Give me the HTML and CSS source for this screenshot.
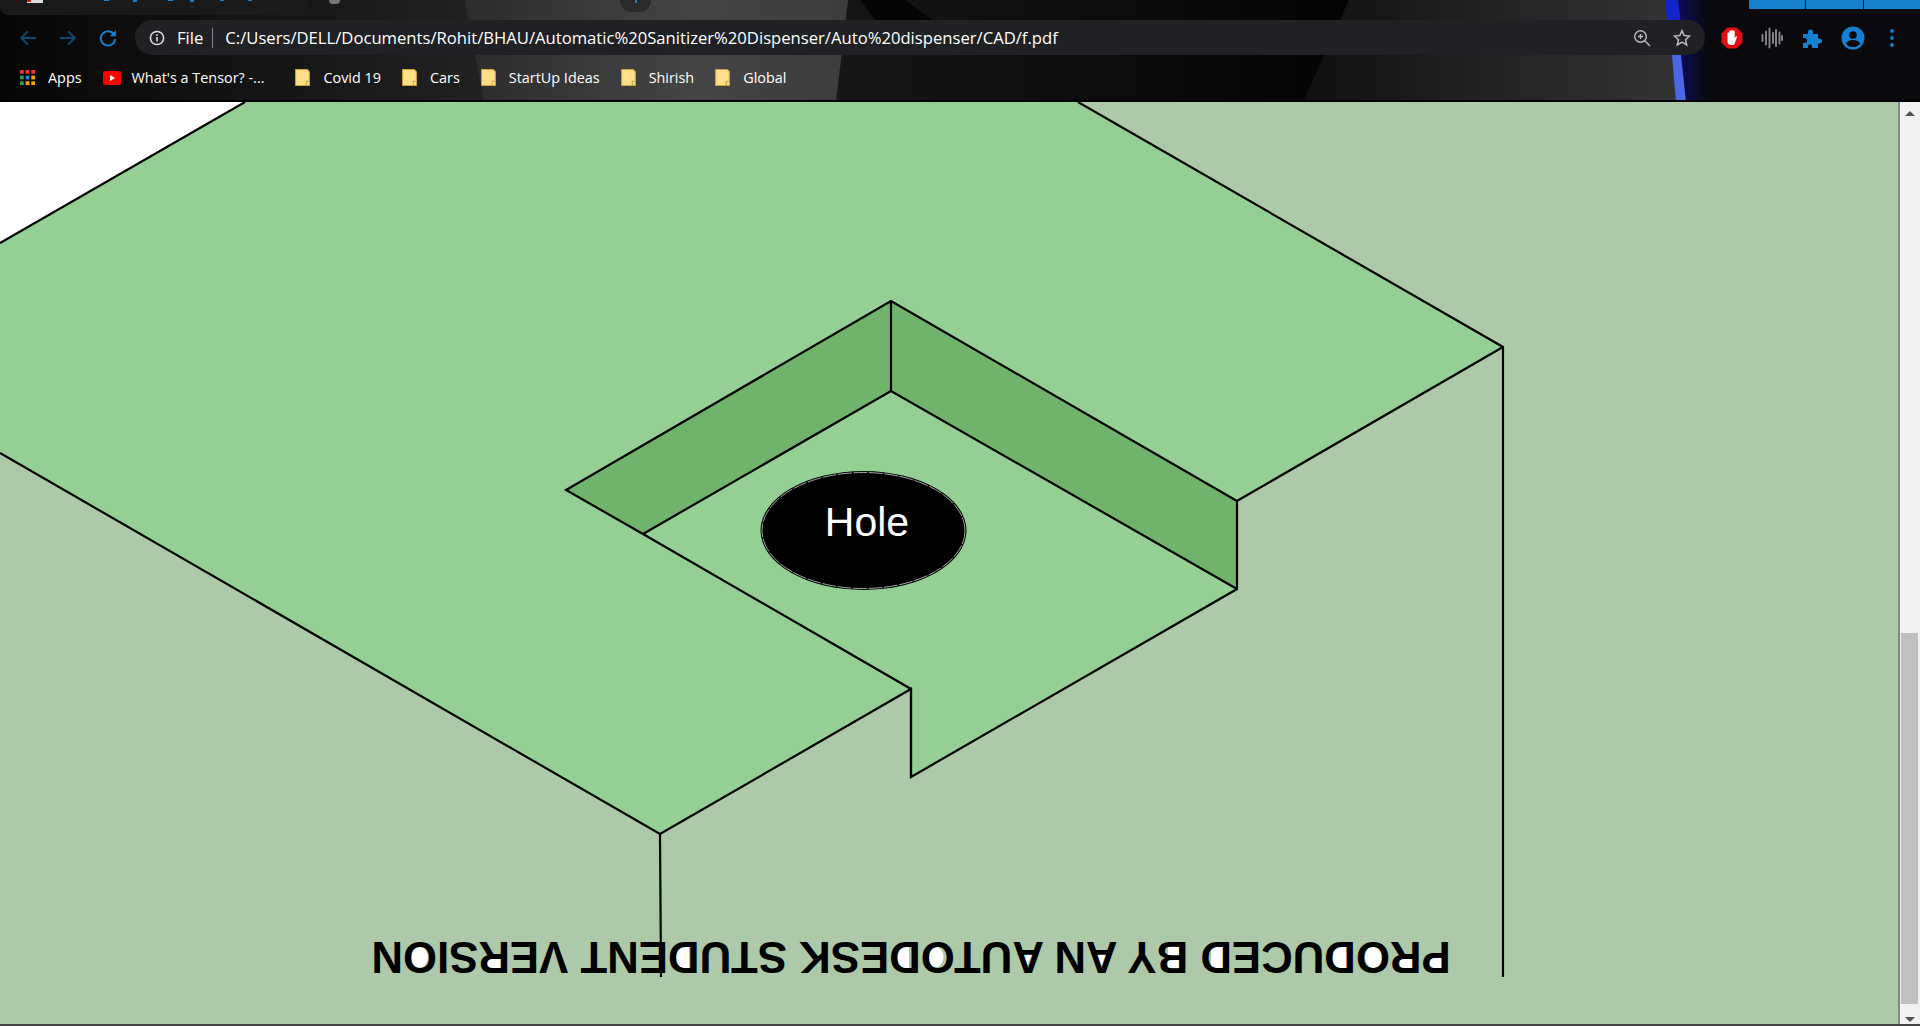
FILE: index.html
```html
<!DOCTYPE html>
<html lang="en">
<head>
    <meta charset="UTF-8">
    <meta name="viewport" content="width=device-width, initial-scale=1.0">
    <title>f.pdf</title>
    <link rel="stylesheet" href="styles.css">
</head>
<body>

    <header class="browser">
        <svg class="wallpaper" viewBox="0 0 1920 102" preserveAspectRatio="none">
            <defs>
                <linearGradient id="wp-left" x1="0" x2="1" y1="0" y2="0">
                    <stop offset="0" stop-color="#060607"/>
                    <stop offset="1" stop-color="#222"/>
                </linearGradient>
                <linearGradient id="wp-gray" x1="0" x2="1" y1="0" y2="0">
                    <stop offset="0" stop-color="#2c2c2c"/>
                    <stop offset="0.6" stop-color="#454545"/>
                    <stop offset="1" stop-color="#3c3c3c"/>
                </linearGradient>
                <linearGradient id="wp-mid" x1="0" x2="1" y1="0" y2="0">
                    <stop offset="0" stop-color="#161616"/>
                    <stop offset="1" stop-color="#030304"/>
                </linearGradient>
                <linearGradient id="wp-right" x1="0" x2="1" y1="0" y2="0">
                    <stop offset="0" stop-color="#101010"/>
                    <stop offset="1" stop-color="#343436"/>
                </linearGradient>
                <linearGradient id="wp-glow" x1="0" x2="1" y1="0" y2="0">
                    <stop offset="0" stop-color="#0a0a5c"/>
                    <stop offset="1" stop-color="#0a0a0e"/>
                </linearGradient>
            </defs>
            <rect width="1920" height="102" fill="#0a0a0e"/>
            <rect width="500" height="102" fill="url(#wp-left)"/>
            <polygon points="465,0 850,0 838,102 484,102" fill="url(#wp-gray)"/>
            <polygon points="848,0 1349,0 1303,102 836,102" fill="url(#wp-mid)"/>
            <polygon points="860,0 905,0 960,40 890,40" fill="#050505"/>
            <polygon points="1349,0 1668,0 1680,102 1303,102" fill="url(#wp-right)"/>
            <rect x="1678" width="30" height="102" fill="url(#wp-glow)"/>
            <polygon points="1665,0 1678,0 1683,40 1669,40" fill="#1224c8"/>
            <polygon points="1672,55 1681,55 1686,102 1676,102" fill="#4a68e6"/>
            <rect y="100" width="1920" height="2" fill="#000"/>
        </svg>

        <div class="tab-strip">
            <div class="tab-current">
                <svg class="tab-bits" viewBox="0 0 300 4">
                    <rect x="27" width="16" height="3" fill="#ddd"/>
                    <rect x="27" width="4" height="2" fill="#c22"/>
                    <rect x="104" width="5" height="1" fill="#1580d0"/>
                    <rect x="133" width="4" height="2" fill="#1580d0"/>
                    <rect x="168" width="5" height="1" fill="#1580d0"/>
                    <rect x="190" width="4" height="2" fill="#1580d0"/>
                    <rect x="220" width="4" height="1" fill="#1580d0"/>
                    <rect x="248" width="4" height="1" fill="#1580d0"/>
                </svg>
            </div>
            <div class="tab-dot"></div>
            <div class="tab-round"><span></span></div>
            <div class="win-controls">
                <span></span><span></span><span></span>
            </div>
        </div>

        <div class="toolbar">
            <div class="nav-btns">
                <svg class="nav-icon" viewBox="0 0 16 16"><path d="M15 8H2M8 2 2 8l6 6" fill="none" stroke="#0f4a75" stroke-width="1.6"/></svg>
                <svg class="nav-icon" viewBox="0 0 16 16"><path d="M1 8h13M8 2l6 6-6 6" fill="none" stroke="#0f4a75" stroke-width="1.6"/></svg>
                <svg class="nav-icon" viewBox="0 0 16 16"><path d="M13.6 5.200A6.400 6.400 0 1 0 14.400 9" fill="none" stroke="#1580d0" stroke-width="1.700"/><path d="M15 1v5.400H9.600z" fill="#1580d0"/></svg>
            </div>
            <div class="omnibox">
                <svg class="info-icon" viewBox="0 0 16 16"><circle cx="8" cy="8" r="6.600" fill="none" stroke="#ddd" stroke-width="1.500"/><path d="M7.200 7h1.600v4.600H7.200zM7.200 4.300h1.600v1.600H7.200z" fill="#ddd"/></svg>
                <span class="scheme">File</span>
                <span class="url">C:/Users/DELL/Documents/Rohit/BHAU/Automatic%20Sanitizer%20Dispenser/Auto%20dispenser/CAD/f.pdf</span>
                <svg class="omni-icon" viewBox="0 0 18 18"><circle cx="7.500" cy="7.500" r="5.800" fill="none" stroke="#bbb" stroke-width="1.400"/><path d="M11.800 11.800 17 17M5 7.500h5M7.500 5v5" fill="none" stroke="#bbb" stroke-width="1.400"/></svg>
                <svg class="omni-icon star" viewBox="0 0 18 18"><path d="M9 1.600l2.200 5 5.400.5-4.100 3.600 1.200 5.300L9 13.200 4.300 16l1.200-5.300L1.400 7.100l5.400-.5z" fill="none" stroke="#bbb" stroke-width="1.500"/></svg>
            </div>
            <div class="ext-btns">
                <svg class="ext-icon" viewBox="0 0 22 22"><polygon points="6.500,0.500 15.500,0.500 21.500,6.500 21.500,15.500 15.500,21.500 6.500,21.500 0.500,15.500 0.500,6.500" fill="#e01010"/><path d="M6.500 11V6.500a.9.900 0 0 1 1.800 0V4.500a.9.900 0 0 1 1.800 0V3.800a.9.900 0 0 1 1.800 0v.7a.9.900 0 0 1 1.800 0V11l1-1.500c.6-.8 1.700-.1 1.200.7L13.500 17c-.5.700-1 1-2 1H10c-2.300 0-3.500-1.500-3.500-3.500z" fill="#fff"/></svg>
                <svg class="ext-icon" viewBox="0 0 22 22"><path d="M1.500 8v6M5 4.500v13M8.500 1.500v19M12 6v10M15 3v16M18.500 5.500v11M21 9v4" fill="none" stroke="#888" stroke-width="1.900" stroke-linecap="round"/></svg>
                <svg class="ext-icon" viewBox="0 0 22 22"><path d="M2 7h5V5a2.500 2.500 0 0 1 5 0v2h5v4.500h1.500a2.500 2.500 0 0 1 0 5H17V21H11v-1.800a2 2 0 0 0-4 0V21H2v-5h1.500a2.500 2.500 0 0 0 0-5H2z" fill="#1580d0"/></svg>
                <svg class="ext-icon avatar" viewBox="0 0 24 24"><circle cx="12" cy="12" r="11.500" fill="#1580d0"/><circle cx="12" cy="9" r="3.800" fill="#0a0a0c"/><path d="M4.800 17.500c1.500-2.500 4.500-3.500 7.200-3.500s5.700 1 7.200 3.500a9 9 0 0 1-14.400 0z" fill="#0a0a0c"/></svg>
                <svg class="ext-icon menu" viewBox="0 0 4 18"><circle cx="2" cy="2" r="1.900" fill="#1580d0"/><circle cx="2" cy="9" r="1.900" fill="#1580d0"/><circle cx="2" cy="16" r="1.900" fill="#1580d0"/></svg>
            </div>
        </div>

        <nav class="bookmarks">
            <a class="bm bm-apps">
                <svg class="apps-icon" viewBox="0 0 17 17">
                    <rect width="4" height="4" x="0" y="0" fill="#e33"/><rect width="4" height="4" x="6" y="0" fill="#e33"/><rect width="4" height="4" x="12" y="0" fill="#e33"/>
                    <rect width="4" height="4" x="0" y="6" fill="#2a9d4f"/><rect width="4" height="4" x="6" y="6" fill="#2a7de1"/><rect width="4" height="4" x="12" y="6" fill="#f5a800"/>
                    <rect width="4" height="4" x="0" y="12" fill="#2a9d4f"/><rect width="4" height="4" x="6" y="12" fill="#f5a800"/><rect width="4" height="4" x="12" y="12" fill="#f5a800"/>
                </svg>Apps</a>
            <a class="bm bm-yt">
                <svg class="yt-icon" viewBox="0 0 18 14"><rect width="18" height="14" rx="3" fill="#f00"/><path d="M7 4l5 3-5 3z" fill="#fff"/></svg>What's a Tensor? -...</a>
            <a class="bm"><svg class="folder" viewBox="0 0 14 16"><use href="#note"/></svg>Covid 19</a>
            <a class="bm"><svg class="folder" viewBox="0 0 14 16"><use href="#note"/></svg>Cars</a>
            <a class="bm"><svg class="folder" viewBox="0 0 14 16"><use href="#note"/></svg>StartUp Ideas</a>
            <a class="bm"><svg class="folder" viewBox="0 0 14 16"><use href="#note"/></svg>Shirish</a>
            <a class="bm"><svg class="folder" viewBox="0 0 14 16"><use href="#note"/></svg>Global</a>
        </nav>
        <svg class="defs" width="0" height="0"><defs><g id="note"><path d="M.5.5h11l2 2v13H.5z" fill="#ffe089" stroke="#c9a238"/><path d="M13.500 11.500h-3v4" fill="none" stroke="#c9a238"/></g></defs></svg>
    </header>

    <main class="viewer">
        <svg class="drawing" viewBox="0 0 1898 922">
            <rect width="1898" height="922" fill="#adc9a9"/>
            <!-- y here is screen y minus 102 -->
            <polygon points="0,0 245,0 0,141" fill="#fff"/>
            <polygon class="top" points="245,0 1078,0 1503,245 1237,399 1237,487 911,675 911,587 660,732 0,351 0,141"/>
            <polygon class="wall" points="566,388 891,199 891,289 643,432"/>
            <polygon class="wall" points="891,199 1237,399 1237,487 891,289"/>
            <polyline class="edge" points="0,141 245,0"/>
            <polyline class="edge" points="1078,0 1503,245 1503,875"/>
            <polyline class="edge" points="1503,245 1237,399 1237,487 911,675 911,587 660,732 0,351"/>
            <polyline class="edge" points="660,732 661,875"/>
            <polyline class="edge" points="911,675 911,587 643,432 566,388 891,199 1237,399"/>
            <polyline class="edge" points="643,432 891,289 1237,487"/>
            <line class="edge" x1="891" y1="199" x2="891" y2="289"/>
            <ellipse cx="863.500" cy="428.500" rx="103" ry="59.500" fill="#000"/>
            <ellipse class="hole-rim" cx="863.500" cy="428.500" rx="101.500" ry="58"/>
            <text class="hole-label" x="867" y="434" text-anchor="middle">Hole</text>
            <!-- the closed letters of the stamp are white inside -->
            <g class="counters">
                <ellipse cx="419" cy="855" rx="9" ry="11"/>
                <rect x="487" y="856" width="14" height="10"/>
                <rect x="675" y="844" width="14" height="22"/>
                <rect x="895" y="844" width="14" height="22"/>
                <ellipse cx="934.500" cy="855" rx="9" ry="11"/>
                <polygon points="1021,850 1033,850 1027,864"/>
                <polygon points="1095,850 1107,850 1101,864"/>
                <rect x="1168" y="845" width="13" height="9"/>
                <rect x="1168" y="857" width="13" height="9"/>
                <rect x="1211" y="844" width="14" height="22"/>
                <rect x="1333" y="844" width="14" height="22"/>
                <ellipse cx="1374" cy="855" rx="9" ry="11"/>
                <rect x="1400" y="856" width="14" height="10"/>
                <rect x="1429" y="854" width="14" height="12"/>
            </g>
            <text class="watermark" transform="rotate(180 911 840)" x="911" y="840" text-anchor="middle">PRODUCED BY AN AUTODESK STUDENT VERSION</text>
        </svg>
        <div class="scrollbar">
            <div class="arrow arrow-up"></div>
            <div class="track"><div class="thumb"></div></div>
            <div class="arrow arrow-down"></div>
        </div>
    </main>

</body>
</html>
```
FILE: styles.css
```css
* {
    box-sizing: border-box;
}
html, body {
    margin: 0;
    height: 100%;
    overflow: hidden;
}
body {
    display: flex;
    flex-direction: column;
    font-family: "Liberation Sans", Arial, sans-serif;
    background: #000;
}
.browser {
    position: relative;
    height: 102px;
    flex: none;
    color: #fff;
    font-family: "Open Sans", "Noto Sans", sans-serif;
    overflow: hidden;
}
.wallpaper {
    position: absolute;
    left: 0;
    top: 0;
    width: 100%;
    height: 100%;
}
.tab-strip, .toolbar, .bookmarks {
    position: relative;
    display: flex;
}
.tab-strip {
    height: 20px;
    align-items: flex-start;
}
.tab-current {
    width: 308px;
    height: 15px;
    background: #1a1a1a;
    border-radius: 0 0 8px 8px;
}
.tab-bits {
    display: block;
    width: 300px;
    height: 4px;
}
.tab-dot {
    width: 11px;
    height: 4px;
    margin-left: 21px;
    background: #777;
    border-radius: 0 0 6px 6px;
}
.tab-round {
    width: 31px;
    height: 12px;
    margin-left: 280px;
    background: #2a2a2a;
    border-radius: 0 0 16px 16px;
    display: flex;
    justify-content: center;
}
.tab-round span {
    width: 2px;
    height: 3px;
    background: #1580d0;
}
.win-controls {
    display: flex;
    gap: 1px;
    height: 9px;
    margin-left: auto;
}
.win-controls span {
    width: 56px;
    background: #1580d0;
}
.win-controls span:nth-child(2) {
    width: 57px;
}
.toolbar {
    height: 35px;
    align-items: center;
}
.nav-btns {
    display: flex;
    align-items: center;
    gap: 22px;
    width: 135px;
    padding-left: 19px;
}
.nav-icon {
    width: 18px;
    height: 18px;
}
.omnibox {
    width: 1570px;
    height: 35px;
    display: flex;
    align-items: center;
    background: #202124;
    border-radius: 18px;
    padding: 0 14px;
    font-size: 16.65px;
}
.info-icon {
    width: 16px;
    height: 16px;
    margin-right: 12px;
}
.scheme {
    padding-right: 9px;
    border-right: 1px solid #888;
    line-height: 20px;
    margin-right: 12px;
}
.url {
    flex: 1;
    white-space: nowrap;
}
.omni-icon {
    width: 18px;
    height: 18px;
    margin-left: 22px;
}
.ext-btns {
    display: flex;
    align-items: center;
    padding-left: 16px;
    gap: 18px;
}
.ext-icon {
    width: 22px;
    height: 22px;
}
.avatar {
    width: 24px;
    height: 24px;
}
.menu {
    width: 4px;
    height: 18px;
    margin-left: 7px;
}
.bookmarks {
    height: 47px;
    align-items: center;
    padding: 0 0 2px 20px;
    font-size: 14.4px;
    gap: 21px;
}
.bm {
    display: flex;
    align-items: center;
    white-space: nowrap;
}
.apps-icon {
    width: 16px;
    height: 16px;
    margin-right: 12px;
}
.yt-icon {
    width: 18px;
    height: 14px;
    margin-right: 11px;
}
.bm-yt {
    margin-right: 10px;
}
.folder {
    width: 15px;
    height: 17px;
    margin-right: 13px;
}
.defs {
    position: absolute;
}
.viewer {
    flex: 1;
    display: flex;
    min-height: 0;
    border-bottom: 2px solid #444;
}
.drawing {
    flex: 1;
    width: 1898px;
    height: 100%;
    display: block;
    min-width: 0;
}
.top {
    fill: #94cf94;
}
.wall {
    fill: #70b46c;
}
.edge {
    fill: none;
    stroke: #000;
    stroke-width: 2.2;
}
.hole-rim {
    fill: none;
    stroke: #ccc;
    stroke-width: 0.8;
    stroke-dasharray: 14 1.5;
}
.hole-label {
    font-family: "Liberation Sans", Arial, sans-serif;
    font-size: 41px;
    fill: #fff;
}
.counters {
    fill: #fff;
}
.watermark {
    font-family: "Liberation Sans", Arial, sans-serif;
    font-size: 43.75px;
    font-weight: bold;
    fill: #000;
}
.scrollbar {
    width: 22px;
    flex: none;
    display: flex;
    flex-direction: column;
    background: #f1f1f1;
    border-left: 2px solid #7b8a84;
}
.arrow {
    height: 20px;
    flex: none;
    display: flex;
    justify-content: center;
}
.arrow::before {
    content: "";
    height: 0;
    border-left: 5px solid transparent;
    border-right: 5px solid transparent;
}
.arrow-up {
    padding-top: 9px;
}
.arrow-down {
    align-items: flex-end;
    padding-bottom: 2px;
}
.arrow-up::before {
    border-bottom: 5px solid #505050;
}
.arrow-down::before {
    border-top: 5px solid #505050;
}
.track {
    flex: 1;
    display: flex;
    flex-direction: column;
    justify-content: flex-end;
    padding-left: 1px;
}
.thumb {
    width: 17px;
    height: 371px;
    background: #c0c0c0;
}
```
